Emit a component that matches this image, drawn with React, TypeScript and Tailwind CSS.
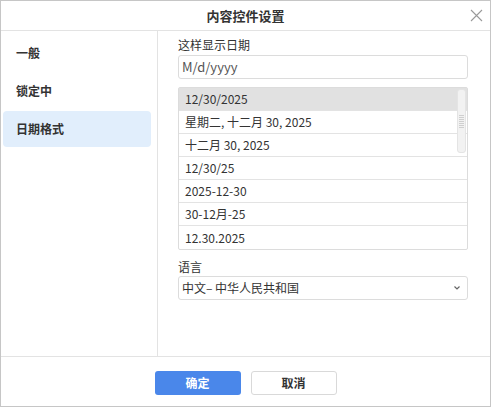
import { useState } from "react";

const tabs = ["一般", "锁定中", "日期格式"];

const formats = [
  "12/30/2025",
  "星期二, 十二月 30, 2025",
  "十二月 30, 2025",
  "12/30/25",
  "2025-12-30",
  "30-12月-25",
  "12.30.2025",
];

export default function App() {
  const [activeTab, setActiveTab] = useState(2);
  const [selected, setSelected] = useState(0);

  return (
    <div
      className="w-[491px] h-[407px] bg-white border border-[#c6c6c6] flex flex-col text-[#333] text-[12px]"
      style={{ fontFamily: '"Noto Sans CJK SC", "Noto Sans", sans-serif' }}
    >
      {/* Title bar */}
      <div className="relative h-[30px] shrink-0 border-b border-[#e3e3e3] flex items-center justify-center">
        <span className="text-[13px] font-bold leading-none">内容控件设置</span>
        <button className="absolute right-[7px] top-[7px] w-[14px] h-[14px] flex items-center justify-center">
          <svg width="13" height="13" viewBox="0 0 13 13" fill="none" stroke="#9a9a9a" strokeWidth="1.1">
            <path d="M1 1 L12 12 M12 1 L1 12" />
          </svg>
        </button>
      </div>

      <div className="flex flex-1 min-h-0">
        {/* Sidebar */}
        <div className="w-[157px] shrink-0 border-r border-[#e3e3e3] pt-[4px] pl-[2px] pr-[6px] flex flex-col gap-[2px]">
          {tabs.map((t, i) => (
            <div
              key={t}
              onClick={() => setActiveTab(i)}
              className={`h-[36px] rounded-[4px] pl-[13px] flex items-center text-[12px] font-bold cursor-pointer ${
                activeTab === i ? "bg-[#e1eefc]" : ""
              }`}
            >
              {t}
            </div>
          ))}
        </div>

        {/* Content */}
        <div className="flex-1 pt-[6px] pl-[20px] pr-[22px] flex flex-col">
          <div className="h-[16px] leading-[16px]">这样显示日期</div>
          <div className="mt-[2px] h-[24px] border border-[#dcdcdc] rounded-[3px] flex items-center pl-[3px] text-[13px] text-[#555]">
            M/d/yyyy
          </div>

          <div className="relative mt-[8px] border border-[#dcdcdc] rounded-[2px]">
            {formats.map((f, i) => (
              <div
                key={f}
                onClick={() => setSelected(i)}
                className={`h-[23px] pl-[6px] flex items-center cursor-pointer ${
                  i < formats.length - 1 ? "border-b border-[#e3e3e3]" : "h-[22px]"
                } ${selected === i ? "bg-[#e1e1e1]" : ""}`}
              >
                {f}
              </div>
            ))}
            {/* Scrollbar overlay */}
            <div className="absolute right-[1px] top-[1px] w-[9px] h-[64px] rounded-[3px] bg-[#f2f2f2] border border-[#e4e4e4] flex flex-col items-center justify-center gap-[1px]">
              {[0, 1, 2, 3, 4, 5, 6].map((k) => (
                <div key={k} className="w-[5px] h-[1px] bg-[#cfcfcf]" />
              ))}
            </div>
          </div>

          <div className="mt-[9px] h-[16px] leading-[16px]">语言</div>
          <div className="mt-[1px] h-[24px] border border-[#dcdcdc] rounded-[3px] flex items-center justify-between pl-[3px] pr-[6px] text-[12px]">
            <span>中文– 中华人民共和国</span>
            <svg width="8" height="6" viewBox="0 0 8 6" fill="none" stroke="#666" strokeWidth="1.2">
              <path d="M1.5 1.5 L4 4 L6.5 1.5" />
            </svg>
          </div>
        </div>
      </div>

      {/* Footer */}
      <div className="h-[50px] shrink-0 border-t border-[#e3e3e3] flex justify-center gap-[10px] pt-[14px]">
        <button className="w-[86px] h-[24px] rounded-[3px] bg-[#4a87ea] text-white text-[12px] font-bold">
          确定
        </button>
        <button className="w-[86px] h-[24px] rounded-[3px] bg-white border border-[#d9d9d9] text-[#333] text-[12px] font-bold">
          取消
        </button>
      </div>
    </div>
  );
}
